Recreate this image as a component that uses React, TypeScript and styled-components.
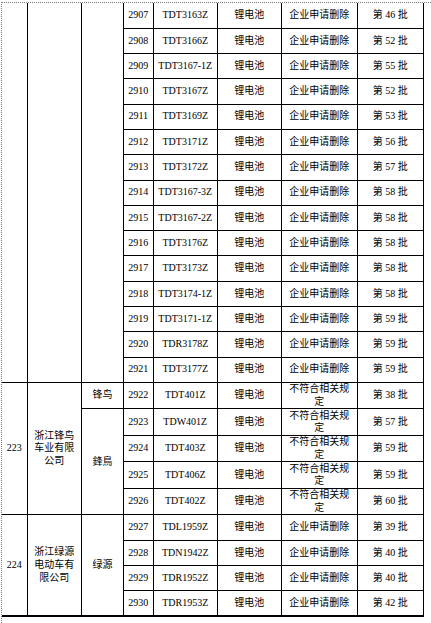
import { FC } from 'react';
import styled, { createGlobalStyle } from 'styled-components';

type Lead = { text: string; span: number; pad?: number };

interface IItem {
  no: number;
  model: string;
  batch: number;
  reason?: string;
  tall?: boolean;
  lead?: Lead[];
}

const DELETE = '企业申请删除';
const RULES = '不符合相关规定';

const items: IItem[] = [
  {
    no: 2907,
    model: 'TDT3163Z',
    batch: 46,
    lead: [
      { text: '', span: 15 },
      { text: '', span: 15 },
      { text: '', span: 15 },
    ],
  },
  { no: 2908, model: 'TDT3166Z', batch: 52 },
  { no: 2909, model: 'TDT3167-1Z', batch: 55 },
  { no: 2910, model: 'TDT3167Z', batch: 52 },
  { no: 2911, model: 'TDT3169Z', batch: 53 },
  { no: 2912, model: 'TDT3171Z', batch: 56 },
  { no: 2913, model: 'TDT3172Z', batch: 57 },
  { no: 2914, model: 'TDT3167-3Z', batch: 58 },
  { no: 2915, model: 'TDT3167-2Z', batch: 58 },
  { no: 2916, model: 'TDT3176Z', batch: 58 },
  { no: 2917, model: 'TDT3173Z', batch: 58 },
  { no: 2918, model: 'TDT3174-1Z', batch: 58 },
  { no: 2919, model: 'TDT3171-1Z', batch: 59 },
  { no: 2920, model: 'TDR3178Z', batch: 59 },
  { no: 2921, model: 'TDT3177Z', batch: 59 },
  {
    no: 2922,
    model: 'TDT401Z',
    batch: 38,
    reason: RULES,
    tall: true,
    lead: [
      { text: '223', span: 5 },
      { text: '浙江锋鸟车业有限公司', span: 5, pad: 5 },
      { text: '锋鸟', span: 1 },
    ],
  },
  { no: 2923, model: 'TDW401Z', batch: 57, reason: RULES, tall: true, lead: [{ text: '鋒鳥', span: 4 }] },
  { no: 2924, model: 'TDT403Z', batch: 59, reason: RULES, tall: true },
  { no: 2925, model: 'TDT406Z', batch: 59, reason: RULES, tall: true },
  { no: 2926, model: 'TDT402Z', batch: 60, reason: RULES, tall: true },
  {
    no: 2927,
    model: 'TDL1959Z',
    batch: 39,
    lead: [
      { text: '224', span: 4 },
      { text: '浙江绿源电动车有限公司', span: 4, pad: 5 },
      { text: '绿源', span: 4 },
    ],
  },
  { no: 2928, model: 'TDN1942Z', batch: 40 },
  { no: 2929, model: 'TDR1952Z', batch: 40 },
  { no: 2930, model: 'TDR1953Z', batch: 42 },
];

const widths = [25, 54.7, 41.6, 30, 64, 64, 76, 66];

const App: FC = () => {
  return (
    <>
      <GlobalStyle />
      <Sheet>
        <Table>
          <colgroup>
            {widths.map((w, i) => (
              <col key={i} style={{ width: `${w}px` }} />
            ))}
          </colgroup>
          <tbody>
            {items.map((item) => (
              <Row key={item.no} $tall={item.tall}>
                {item.lead?.map((l, i) => (
                  <Cell key={i} rowSpan={l.span} $pad={l.pad}>
                    {l.text}
                  </Cell>
                ))}
                <Cell>{item.no}</Cell>
                <Cell>{item.model}</Cell>
                <Cell>锂电池</Cell>
                <Cell $pad={7}>{item.reason ?? DELETE}</Cell>
                <Cell>第 {item.batch} 批</Cell>
              </Row>
            ))}
          </tbody>
        </Table>
      </Sheet>
    </>
  );
};

export default App;

const GlobalStyle = createGlobalStyle`
  html, body {
    margin: 0;
    padding: 0;
    background: #fff;
  }

  body {
    font-family: "Liberation Serif", "Noto Sans CJK SC", serif;
    color: #000;
  }
`;

const Sheet = styled.div`
  box-sizing: border-box;
  width: 430px;
  height: 621px;
  margin: 2px 0 0 1px;
  border-top: 1px dotted #7a7a7a;
  border-left: 1px dotted #7a7a7a;
`;

const Table = styled.table`
  border-collapse: collapse;
  table-layout: fixed;
  width: 421.3px;
  border-top: hidden;
  border-left: hidden;
  border-right: 1px solid #000;
  border-bottom: 2px solid #000;
`;

const Row = styled.tr<{ $tall?: boolean }>`
  height: ${(p) => (p.$tall ? 26.5 : 25.3)}px;
`;

const Cell = styled.td<{ $pad?: number }>`
  border: 1px solid #000;
  padding: 0 ${(p) => p.$pad ?? 1}px;
  text-align: center;
  vertical-align: middle;
  font-size: 10px;
  line-height: 12.7px;
  color: #000;
  overflow: hidden;
  white-space: normal;
`;
